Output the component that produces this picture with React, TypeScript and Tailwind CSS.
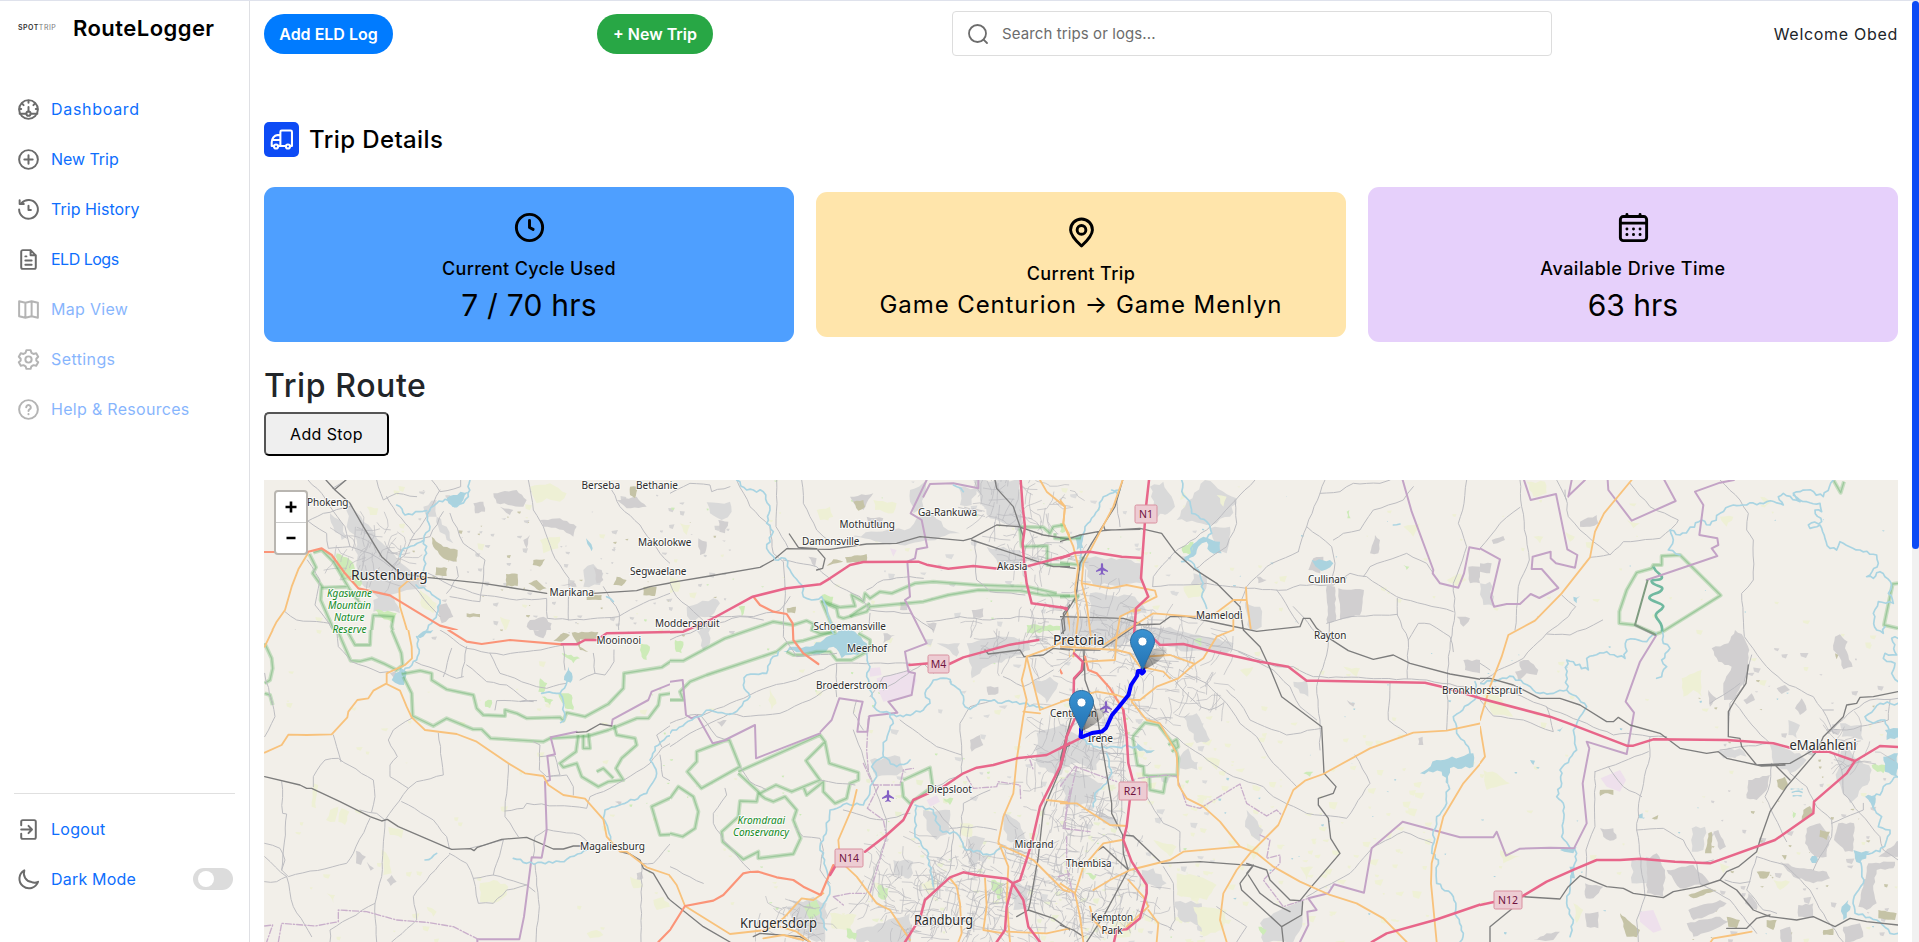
import React from "react";

type Shape = [string, string];

const COLORS: Record<string, { c: string; w: number; dash?: string }> = {
  minor: { c: "#bdbdc1", w: 3 },
  rail: { c: "#7d7d7d", w: 4 },
  motor: { c: "#e8668a", w: 7.5 },
  trunk: { c: "#fb9478", w: 6.5 },
  prim: { c: "#f8c27c", w: 5.5 },
  water: { c: "#a9d4e2", w: 5 },
  admin: { c: "#c3a3c6", w: 6 },
  dash: { c: "#c9afcb", w: 4, dash: "18 6 4 6" },
};
const FILLS: Record<string, string> = {
  urban: "#d9d9d9",
  ind: "#d1cfd0",
  quarry: "#c5c3a6",
  lake: "#aad3df",
  farm: "#eef0d5",
  wood: "#cdebb8",
  mil: "#eee0ec",
};
// Step length and sideways jitter used to roughen natural outlines.
const ROUGH: Record<string, [number, number]> = {
  water: [11, 5],
  minor: [22, 2.2],
  urban: [16, 6],
  ind: [12, 3],
  quarry: [10, 2],
  lake: [12, 5],
  farm: [14, 4],
  wood: [10, 4],
};

const A: Shape[] = [
  ["urban", "M295 480L340 545L430 640L480 690L530 740L470 750L440 760L390 790L370 760L320 720L320 600L290 560Z"],
  ["urban", "M240 520L270 540L290 590L275 600L250 560Z"],
  ["urban", "M560 530L590 560L610 610L590 600L565 560ZM520 500L560 480L560 530L530 530Z"],
  ["urban", "M370 780L430 770L450 820L370 815ZM1000 690L1030 672L1060 700L1050 735L1000 740Z"],
  ["ind", "M670 490L700 485L705 515L675 520ZM730 460L800 450L830 480L820 500L740 490ZM1100 480L1160 470L1190 500L1130 505ZM750 500L790 510L780 525ZM870 540L930 535L980 560L970 590L940 570L880 560ZM820 600L840 585L830 625ZM840 840L880 830L905 850L900 880L850 890L830 860ZM1030 680L1055 690L1060 720L1040 730ZM930 735L970 725L980 740ZM560 800L590 790L610 830L575 850Z"],
  ["quarry", "M545 590L580 620L623 630L620 665L580 655L550 620ZM558 682L592 684L590 708L556 706ZM768 702L803 702L803 738L768 738ZM850 660L885 658L870 680L848 675ZM835 730L860 720L890 745L870 752ZM1100 710L1130 720L1115 738L1090 735ZM1140 440L1162 440L1155 475L1140 465ZM1180 742L1220 740L1215 768L1180 766ZM650 820L690 822L690 832L650 830ZM1010 768L1055 765L1055 780L1010 780ZM995 875L1045 878L1040 895L990 890ZM900 880L955 878L950 898L890 898Z"],
  ["farm", "M840 440L900 430L950 460L930 485L890 475L860 490ZM870 600L930 590L925 625L880 640ZM510 750L560 790L550 820L515 800ZM350 500L385 505L380 525L360 525ZM750 830L780 840L765 875Z"],
  ["wood", "M260 640L300 660L335 720L330 740L290 720L265 690ZM375 810L440 820L430 850L385 825Z"],
  ["lake", "M590 475L610 465L655 455L640 480L615 503L595 490ZM1008 595L1028 625L1025 634L1012 612Z"],
  ["greenband", "M178 642L198 682L188 700L215 738L212 780L248 862L275 915"],
  ["greenband", "M190 638L215 630L250 665L300 750L330 790M215 743L290 740M360 915L370 826L430 830L425 860L438 905"],
  ["minor", "M174 420L215 460L262 530L285 560L300 620L360 640L420 680M248 445L288 420M570 450L530 530L485 595L465 645L425 680M545 420L570 455L632 440L632 420M380 420L400 480L440 460L500 470M600 520L640 610L705 660L690 785L600 770"],
  ["minor", "M835 420L850 510L880 560L915 655L957 715L955 840M1085 450L1110 500L1170 555L1230 640L1260 670M535 700L600 735L690 765L800 780L890 775L892 835L960 840L1105 830L1180 790L1260 760M105 815L140 840L240 850M170 540L230 580L235 625L300 620M172 660L210 720L195 795L245 865M430 680L510 760L570 830M620 680L625 710L590 760M1060 740L1108 820L1105 900M480 600L540 590L580 515M300 500L220 520L170 545M410 470L440 520L490 580M136 870V890"],
  ["rail", "M228 420L255 450L300 490L340 560L395 650L450 700L530 712L700 730L890 760M1030 760L1160 752L1200 740L1260 729M255 448L288 420"],
  ["water", "M660 420L655 470L620 500L585 478L560 490L530 520L540 560L522 600L530 640L518 700M440 495L465 525L530 512M522 600L460 625L450 650M498 735L540 755L570 780L565 810L545 850L515 880L512 900M1070 770L1090 785"],
  ["prim", "M174 640L145 688L125 740L105 810L80 845L52 900M530 712L475 722L448 745L450 800L465 850L480 900"],
  ["trunk", "M42 636L172 636L215 625L245 645L285 700L325 745L420 766L500 815L570 857L620 870L660 900M740 898H830"],
  ["motor", "M980 898H1040L1060 883L1080 877H1262"],
];

const E: Shape[] = [
  ["ind", "M820 0H860L850 25L825 15ZM288 662L318 680L303 705L288 700ZM320 695L342 715L332 722ZM380 750L395 735L410 755L392 768ZM1065 515L1085 515L1080 528ZM1130 730L1145 725L1150 745L1130 750ZM390 130L410 120L405 150Z"],
  ["quarry", "M910 8L930 15L905 35L880 32ZM935 8L1015 6L1010 25L960 28L960 50L985 65L960 60Z"],
  ["farm", "M160 460L175 465L168 535L155 530ZM210 540L235 530L225 575L198 570ZM245 535L268 545L255 585L235 575ZM385 590L430 600L425 625L390 615ZM365 660L385 680L395 730L370 735ZM660 760L700 750L745 770L740 795L700 820L660 815ZM1110 740L1140 750L1150 770L1120 775ZM1180 810L1210 800L1230 830L1190 840ZM200 790L225 795L220 820ZM500 830L530 845L520 860ZM980 910L1010 900L1030 915L990 925Z"],
  ["wood", "M1140 40L1170 50L1160 90L1145 80ZM840 145L862 160L850 190L835 185ZM905 70L960 85L940 100ZM675 215L695 210L690 235L675 230ZM895 190L935 195L940 240L915 235ZM845 200L880 210L870 225Z"],
  ["lake", "M395 150L420 112L440 125L432 165L405 158ZM925 110L938 140L932 158L912 150ZM470 20L500 0H520L480 25Z"],
  ["greenband", "M232 0L272 92L300 94L335 85L370 100L410 120L428 105L424 70L395 0M260 0L285 45H330L332 0"],
  ["greenband", "M14 40L35 85L38 115L30 150L14 160M14 190L30 195L38 225"],
  ["greenband", "M425 132L480 122L515 130L515 150L560 178L640 195L650 235L670 255L735 258L735 240L770 250L800 265L900 262L910 272L920 248L975 260L1045 222L1090 175L1092 130L1205 112L1235 92L1262 90"],
  ["greenband", "M430 140L455 190L458 258L520 288L560 265L640 298L665 298L692 325L850 335L870 325L985 318L1045 300L1130 265L1165 265L1195 225L1200 195L1250 188L1262 200"],
  ["greenband", "M955 315L948 365L900 400L910 412L950 400L965 440L1015 470L1045 455L1090 450L1068 415L1085 385L1130 345L1125 325L1070 315L1062 285M970 315V355H990L985 310M1010 425L1030 415L1060 445M1260 470L1238 500L1175 530L1200 615L1262 612"],
  ["minor", "M230 0L235 50L275 95L360 128L385 125M14 130L45 260L14 320M220 315L230 350L243 395M160 470V440L195 390L235 385L340 450L345 500L335 545M65 455L68 550L80 552L65 720M14 640L60 655L75 690L65 720L85 740L260 700L280 670L330 565M14 755L50 755L80 740L100 830L155 920M14 680L80 740M455 265L400 300L385 330L412 380L390 405V440L445 475L470 455L550 435L545 390L535 310M445 475L375 570L365 740L345 820L350 936M425 515L520 570L560 620L568 655M300 540L350 550L375 570M568 670L620 700L640 745L655 820H700L740 780L800 765M568 675L510 735L460 800L470 870L395 936M345 820L210 900V936M540 0L620 55L730 75L820 62L910 45M690 70L720 130L830 170L860 175L920 160M575 55L550 140M620 50L605 140M465 95L590 145L610 140"],
  ["minor", "M910 48L915 120M1000 70L1005 130L960 150M1005 130L1035 135L1062 95V60M620 105L680 155L740 165L800 210L780 215L830 212M705 240L710 212L820 215M820 335L840 345L838 420L860 440M840 380L885 378L900 435L860 440L920 435L940 470V495M745 400L735 560L775 620M735 543L790 535L800 520L980 535L990 500L1050 475L1170 400L1205 355L1262 320M730 630L710 700L700 735L800 765L825 785M630 655L730 630M820 680L825 620L860 598L960 615L990 645M825 700L838 830L828 936M1200 375L1208 440L1262 465M1145 700L1143 936M1262 610L1210 665L1180 700L1145 700M640 745L700 735M1205 350L1190 315L1262 270"],
  ["rail", "M14 440L120 465L140 475H155L240 515L330 560L365 573L382 568L415 590L560 652L575 658L632 656L642 662L652 652L725 628L800 622L880 657H910L940 648L962 648M1080 665L1110 672L1140 690L1150 715L1180 730L1225 805L1262 840"],
  ["admin", "M652 936V928H778L792 860L815 682L845 683L860 600L855 455L870 450L862 378L885 373L872 322L950 305M1055 285L1058 268L1165 210L1175 185L1262 150"],
  ["dash", "M14 888L38 885L20 936M55 936L65 880L165 888L235 875V840L320 845L410 870L500 877L580 890L655 928"],
  ["rail", "M950 307L980 305L1020 282L1055 288"],
  ["water", "M470 20L478 60L470 90L430 125M900 190L918 165L925 140M845 190L900 190L910 215L915 260L902 278M1262 298L1220 320L1185 350L1170 390L1190 430L1160 490L1095 520L1035 540L1030 565L1045 600L1055 640M760 685L800 700L900 695L985 660M495 690L530 670"],
  ["prim", "M38 0L14 50M445 0L455 50L456 85L435 105L380 130L380 160L340 182L325 205L292 210L265 245L262 262L215 313L140 315L85 314L65 345L14 368M380 162L420 182L440 230L455 262L495 300L590 312L650 335L745 400L795 430L850 438L865 465L910 495L975 506L1030 568L1040 620L1080 665L1100 665L1145 700L1160 712L1228 735L1262 795"],
  ["trunk", "M565 0L620 35L665 42L750 30L905 43M1262 850L1235 895L1195 936"],
  ["motor", "M905 43H950L975 30H1010M1025 20L1040 10L1262 5"],
];

const B: Shape[] = [
  ["urban", "M720 60L770 30L760 110L730 130L720 95ZM740 145L790 130L820 170L870 190L750 215L690 225L540 200L620 185L720 175ZM910 30H1050L1060 160L1020 165L960 145L930 90ZM865 50L920 55L905 105L870 105ZM950 230L1050 240L1060 290L985 285ZM50 410L130 385L150 400L120 440L60 450ZM110 97L180 95L185 125L155 150L120 130ZM75 455H120V520L100 540ZM890 520L1000 500L1080 515L1080 540L950 590L905 625L895 560ZM800 520H870L860 560ZM1085 640L1140 620L1165 640L1130 700ZM600 870L690 860L710 910L620 920ZM1100 790L1180 760L1230 850L1160 920L1100 880ZM760 1020L840 1020L840 1080L800 1110L770 1080ZM350 1310L430 1280L470 1300L465 1416H440L380 1380ZM560 1380L720 1330V1416H560ZM900 1100L945 1105L920 1190L895 1180ZM1020 1230L1075 1260V1320L1030 1320ZM1000 1030L1050 1060L1080 1130L1010 1110ZM670 1170L730 1175L720 1225L675 1215Z"],
  ["ind", "M145 150L175 155L165 190L148 185ZM85 205L110 215L105 250L90 255ZM590 140L640 145L635 170L595 165ZM415 260L440 265L435 290ZM950 650L985 650L985 670L955 675ZM900 810L930 795L940 825L905 845ZM770 460H800L790 490ZM690 395L710 392L712 420L690 420ZM905 420L940 415V440L910 445ZM640 490L675 495L640 520ZM140 755L170 750L155 770ZM540 80L610 70L580 120L555 105Z"],
  ["quarry", "M525 262L590 252V275L530 278ZM550 95L580 90L585 110L565 122ZM350 415L378 410L375 430L352 428ZM490 268L520 275L470 288Z"],
  ["lake", "M460 510L500 490L515 480L555 485L590 520L595 545L540 555L515 565L490 530L455 550L400 555L370 540L340 545L370 530L420 530ZM1215 210L1238 205L1240 240L1218 240Z"],
  ["mil", "M620 625L718 600L740 630L725 675L640 695L625 660ZM597 595L630 592L635 615L600 620ZM770 990L800 975L810 995L780 1010ZM660 235L680 240L670 260Z"],
  ["farm", "M0 320L30 335L25 365L0 370ZM440 120L480 110L490 140L450 150ZM30 160L60 165L50 195ZM300 650L320 700L305 720L295 690ZM870 1060L910 1065L905 1100L875 1095ZM480 1330L560 1335L540 1380L485 1375ZM750 1240L800 1230L790 1280ZM610 90L680 100L670 130L615 120Z"],
  ["wood", "M15 510L40 515L35 550L18 545ZM205 410L225 408L215 440ZM400 1310L440 1290L450 1330L420 1350ZM530 1375L560 1390L555 1410L530 1400ZM965 1230L1000 1240L990 1290L965 1260ZM455 375L490 380L480 410L460 395ZM820 985L850 985L840 1005ZM625 1245L655 1255L645 1290L625 1280ZM1070 465H1180L1175 480L1070 490Z"],
  ["greenband", "M0 572L40 572L165 505L310 455L370 465L410 452L430 462L425 480L450 490L495 488L455 395L500 415L505 440L520 445L590 425L600 410L760 395L835 375L925 360L1050 362L1120 375L1225 378"],
  ["greenband", "M455 392L510 412L555 408L545 375L580 395L585 370L600 385L630 365L665 370L735 340L790 335L920 345L1070 350L1160 370"],
  ["greenband", "M0 690L40 690L30 665L60 635L110 615L320 545L350 520L400 512L490 485M350 545L370 555L400 555L440 545L480 545L500 570L545 570L600 540L600 510L565 490M540 440L560 425L600 400"],
  ["greenband", "M80 845L165 812L178 810L210 890L94 955L52 905L80 875ZM205 905L450 795L465 815L408 872L450 930L365 965L318 945L270 970L205 910M465 815L478 880L565 908L565 930L540 940L530 985L495 1000L460 965V935L410 975L400 950"],
  ["greenband", "M265 970L260 995L210 993L205 1040L155 1085L158 1115L220 1168L265 1145V1165L370 1152L392 1105L370 1050L380 1020L345 980L310 995L285 985ZM0 985L25 950L70 980L85 1025L75 1075L38 1100L0 1090"],
  ["greenband", "M700 930L780 893L788 950L720 1000L700 980L695 935M1050 170L1120 172L1140 190L1150 170L1180 165M1050 175L1055 230L1132 228V285L1200 285M1155 190V205L1230 208L1250 190"],
  ["minor", "M0 70L60 40L120 45L125 65L180 50M200 30L240 110L300 170L310 250L340 275L345 350M395 30L400 100L440 180L480 215M320 30L318 170L335 200L355 235M0 340L20 380L120 470M340 270L440 290L490 340L570 380L600 420L720 430L790 480M600 430L600 480M770 455L870 440L960 450L1060 440L1180 450M915 210L920 330L960 365L1065 375M590 360L640 330L720 320L760 325M0 760L60 735L100 735L180 700L300 650L380 630L500 580L720 580M0 830L60 790L180 730L220 740L330 730L420 690L500 640M500 580V680M120 440L250 440L330 420L360 380M0 510L80 480L140 460L210 440L280 450M345 350L340 500L380 560L500 550M600 680L640 620L720 600"],
  ["minor", "M95 740L140 800L170 810M100 1240L0 1190M210 890L240 935L290 960M165 955L170 975L130 1030V1060L160 1110L240 1200M550 780L620 970L650 1050V1100L590 1270L540 1330M580 780L550 730L560 690M375 1070L400 1100L450 1105L460 1140L450 1200L480 1240M450 930L500 940L555 945M875 850L870 760L900 710L970 690M875 850V910L800 950M875 855L800 830L690 750M520 1020L600 1045L640 1050L720 1030M790 1010L850 1080L840 1200L790 1280L770 1340M910 1190L870 1100L880 1000L960 960M640 660L760 580L790 610M1000 620L1060 650L1150 600M880 1380L940 1330L960 1270M980 1080L920 1070L840 1075M1010 1240L930 1290L890 1400"],
  ["dash", "M580 880L610 945L690 945L700 900L730 895M595 900L590 840L595 740M625 950L592 1015L640 1050L650 1100L600 1270M490 1280L540 1270L590 1270M490 1280L520 1305M890 920L910 955L980 950L985 935L1050 945L1052 985M1080 870L1090 900M1185 1075L1190 1010L1215 890L1260 900M1180 1075L1230 1080L1240 1040M1165 1220L1200 1210L1220 1290L1260 1300"],
  ["admin", "M770 30L722 130L755 150L772 232L740 238L735 265L712 275L720 380L705 390L770 520L705 545L715 605L735 610L725 675L655 695L682 728L598 738L592 785L562 785L568 735L578 695L508 685L485 750L452 785M760 80L780 42L850 40L925 55V30M0 635L38 630L48 735L65 745L82 738L128 820L170 810M165 810L255 765L258 865L450 790"],
  ["rail", "M0 338L120 318L270 292L310 270L350 236L480 238L590 222L680 220L750 200L880 212L905 205L980 165L1045 170L1120 195L1205 208M905 210L1150 290L1210 290L1222 375L1180 430L1185 480L1175 490M358 192L385 232L440 236L465 265L458 295L440 300M1262 210L1220 290M975 30L980 55L1030 110L1060 200M945 540L955 552L1050 540L1062 560L1120 555L1150 535L1240 545L1240 630L1262 640M1262 800L1190 830L1170 900L1120 1020L1105 1160L1080 1300L1075 1320L1150 1345L1200 1380L1262 1395M0 1290L100 1370L180 1416M250 1400L270 1390L390 1400L420 1416M1075 1320L1040 1340"],
  ["water", "M200 30L230 60L280 65L300 120L290 160L310 185L290 235L315 270L345 265L365 310L395 345L400 380L425 390L455 380L470 410L490 490M325 545L300 580L290 610L230 615L220 645L240 680L190 730L120 720L85 740L0 790M590 550L600 590L590 620L600 660L620 720L660 730L670 760L640 830L640 860L605 890L620 920L600 960L580 1005L530 1000L480 1020L470 1080L450 1130L470 1200L480 1260L450 1320L470 1380M660 735L700 740L760 720L780 700L765 670L790 630L830 625L870 660L885 710L900 718L930 690L1060 700L1120 715M640 860L680 890L720 870M735 1005L790 1020L810 1080L860 1090L890 1140L960 1155L1000 1130M740 1010L735 1100L770 1140L790 1250M1262 145L1230 200L1240 240L1225 300M850 45L880 65"],
  ["prim", "M1110 30L1130 65L1185 110L1180 160L1205 210L1215 290L1225 420L1200 560M1190 420L1205 500L1150 530L1070 560L1065 590L1055 630L1070 690L1060 740L1040 870L1030 970L1000 1040L985 1115L1015 1190L1010 1290L1020 1416M560 960L548 1010L505 1110L510 1170M528 1190L560 1220L620 1300L660 1320L720 1410M985 1122L1090 1170L1180 1260L1215 1270L1240 1190M840 1225L860 1250L870 1300L875 1390L865 1416M945 1225L950 1310L940 1380L1000 1390M1130 990L1220 1000L1262 1020M0 1218L20 1245L45 1308L180 1392L290 1380L340 1345L395 1285L430 1290L460 1270M1070 560L1110 720L1190 690L1235 690M1060 725L1110 730M1215 1270L1225 1370L1130 1390L1010 1385M1262 350L1230 340M330 1370L380 1385L420 1416M280 1405L340 1395L400 1410"],
  ["trunk", "M250 380L270 405L310 425L350 432L368 460L370 510L400 550L445 582M0 1380L45 1308L130 1292L160 1275L220 1210L240 1206L265 1205L320 1222L370 1230L400 1250L452 1275L490 1185M1240 545L1262 600"],
  ["motor", "M0 487L40 485L120 450L248 380L350 355L450 343L480 325L540 285L580 276L745 275L770 284L835 296L910 288L985 296M1052 30L1058 110L1065 170L1058 220L1063 285L1070 340L1085 400L1190 415M1075 288L1150 268L1205 255L1262 245M718 585L780 580M838 582L880 562L1020 524L1105 510M1190 415V420M820 950L880 910L920 893L970 885L1040 865L1130 855L1180 830L1235 800M775 970L730 990L700 1050L650 1095L585 1145M498 1185L480 1215M1235 620L1215 640L1210 740L1190 800L1170 890L1110 1010L1085 1120L1050 1230L1028 1240M705 1416L750 1345L765 1290L840 1222L880 1207L920 1215L1010 1226L1028 1240L1060 1290L1075 1370L1110 1416M1028 1240L1010 1310L1005 1380L980 1416M1215 545L1235 570V625"],
];

const C: Shape[] = [
  ["urban", "M435 30L530 85L510 140L440 165L350 150L375 110ZM450 175L510 170L500 250L470 245ZM270 50L310 35L345 110L290 145L280 110ZM60 260L185 265L240 280L245 340L100 345ZM90 370L225 380L260 430L180 440L90 440ZM0 440H230L230 490L180 530L0 530ZM250 470L330 470L430 500L520 520L500 550L380 545L280 520ZM555 395L600 410L605 470L570 480ZM400 310L440 320L430 370L395 355ZM370 740L410 730L450 810L410 820ZM385 835L412 900L360 895V860ZM0 770L60 800L120 850L110 900L0 870ZM700 635L740 630L745 680L720 670ZM120 1030L175 1050L170 1080L130 1060ZM600 1360L640 1330L730 1290L728 1350L700 1416H610ZM345 1295L425 1300L420 1370L360 1350ZM245 1200L280 1195L320 1240L300 1260L250 1240ZM560 1020L610 1080L600 1115L555 1070ZM0 930L50 900L130 940L100 1000L20 1010Z"],
  ["ind", "M945 195L960 210L955 250L930 250ZM1225 290H1260V340H1230ZM760 265L790 260L780 310L745 300ZM590 320L620 330L595 340ZM860 690L885 700L880 710ZM1190 440L1230 445L1210 470ZM1075 805L1088 800L1090 825L1075 825ZM800 348L825 350L828 450L802 460ZM835 355L912 360L900 435L840 450ZM1210 570H1262V610L1215 600Z"],
  ["lake", "M410 215L430 200L480 215L485 250L450 245L440 215L415 230L400 260L370 275L390 240ZM755 270L810 270L820 280L785 303ZM45 200L70 195L70 235L50 240ZM225 810L250 835L285 840L260 850L230 835ZM1080 910L1130 870L1200 862L1240 850L1240 890L1170 895L1165 945L1145 905Z"],
  ["farm", "M365 60L380 80L360 90ZM370 350L420 340L430 375L385 385ZM470 75L500 80L490 110ZM350 1210L400 1215L470 1245L440 1290L350 1275ZM850 590L900 595L890 620ZM1160 330L1200 310L1220 330L1190 350ZM400 1310L500 1320L490 1380L430 1400ZM1030 170L1080 160L1060 200ZM280 1110L350 1130L330 1160ZM540 600L580 590L560 620ZM430 860L480 870L470 900ZM150 1350L220 1340L210 1400H160ZM560 1120L600 1130L580 1170ZM720 1190L760 1190L740 1230Z"],
  ["wood", "M860 125L868 120L872 145L862 145ZM75 1210L110 1215L100 1230ZM400 510L425 505L420 530ZM1030 285L1048 290L1040 300ZM730 910L760 905L750 920ZM595 1370L620 1380L610 1395ZM365 230L400 215L395 250H370ZM0 160L18 165L15 185H0Z"],
  ["greenband", "M0 205L60 205L65 195M0 278L60 285L70 260M0 380L55 378L40 395M218 800L255 758L295 765L330 810L345 830L355 865L352 915L268 918L270 960L310 968L318 920M218 800L232 885L250 890L252 915L268 918M325 825L350 808L355 830L335 845"],
  ["minor", "M780 70L840 65L880 40L960 40L990 30M795 30L740 170L715 245M740 170L815 230L825 280L815 340M820 210L850 190L900 180L940 120L1030 90L1060 50M1220 30L1212 100L1195 160L1220 230L1200 290L1180 340L1185 430L1165 560L1160 780M280 350L440 340L560 355L680 360L720 345L820 345L870 310L920 320L1010 380L1180 425M910 320L930 290L1040 250L1100 280L1120 310M1012 385V435L1045 510L1042 625M650 360L715 460M800 460L870 440L1012 433M808 460L800 555L770 650L780 750V840M585 30L540 75L440 180L340 250L280 320L278 350M525 90L530 160L500 230L400 300M170 90L180 170M250 470L350 490L440 520L540 545L650 590L700 590L760 620L1100 630L1262 660"],
  ["minor", "M330 620L420 710L450 720L490 700M360 600L440 640L500 700L540 760L590 800L640 880L710 950M500 660L540 700L570 750L680 795L785 775M535 545L600 580L640 600L690 650L720 710L770 750M250 720L370 820L520 920L610 950L640 980L740 1030L860 1045L930 940L885 855M260 980L310 1060L360 1085V1145M310 1190L340 1240L345 1350L330 1380M230 1320L340 1380M470 1310L560 1370L530 1416M1045 510L1075 460L1110 462L1170 500L1180 545M990 640L985 750L1040 790M740 1280L870 1210L940 1130L1030 1085L1120 1120M150 720L190 780M120 850L190 850L190 940L180 1080M715 245L620 290L560 350L540 400M770 490L700 410"],
  ["admin", "M1028 30L1055 125L1120 300L1118 310L1140 340L1195 353L1212 310L1228 232L1262 238M720 1416L745 1365L742 1325L770 1320L745 1285L805 1270L822 1243L912 1268L935 1135L1028 1055L1200 1102H1262"],
  ["dash", "M0 950L45 890L170 935M10 1070L50 890M10 1075L90 1085M235 925L320 915L350 920L380 1005L420 1015L540 942L560 1000L620 1038L650 1020L665 1035M600 1095L630 1110L620 1165L660 1155V1180L610 1230L670 1310L745 1285M20 1100V1190L40 1280"],
  ["water", "M365 30L370 75L390 95L395 130L440 155L455 190L430 210L400 225L390 260L365 275M385 270L415 300L430 340L425 380L440 415M180 60L130 80L115 120L75 170L62 240L60 300M155 60L175 75M60 800L100 830L150 830L230 830M140 850L155 910L140 940L105 970L100 1010M1245 635L1250 680L1180 740L1190 790L1225 830L1230 850M1165 945L1160 1000L1130 1040L1115 1150L1135 1170L1130 1240L1180 1280L1190 1340L1210 1390L1200 1416M1000 165L1020 162"],
  ["rail", "M0 215L60 195L130 182L240 175L305 190L345 245L400 295L470 340L540 410L550 480L600 530L630 595L665 680L785 770L792 910L828 950L820 970L775 985L775 1005L805 1045L812 1105L840 1150L750 1255L720 1292L690 1290L630 1230L620 1200L560 1180M188 30L165 110L130 165L135 180L240 178M130 165L95 220L60 280L48 380L5 450L10 490M0 535L50 540L120 540L165 510L230 465L300 462L330 440L380 440L500 465L590 484L720 470L730 445L750 445L770 475L800 500L865 542L940 568L1000 555L1050 580L1170 612L1262 628M0 870L45 700L42 630L70 600L72 540L75 630L110 730L130 850L155 1000V1030L188 1095L190 1150L205 1200L130 1340L80 1416M188 1095L220 1098L305 1180L420 1175L580 1187L540 1240L545 1260L665 1370L725 1335L728 1295M565 1215L600 1270L640 1300L690 1325M115 1140L130 1130L205 1200M665 1370L670 1416M0 1365L40 1380L70 1400M0 290L45 295M560 1210L580 1185M0 440L190 445L240 460"],
  ["trunk", "M75 560L85 600L110 610L150 655L190 720L200 790M0 600L5 610"],
  ["prim", "M70 340L150 355L200 345L285 362L290 380L240 405L220 420L180 440L170 500L165 570L75 575M0 90L15 110L10 160L40 230L55 290L45 360L55 440L40 560M188 30L160 110L70 280L65 340L80 400L95 520M130 525L280 430L400 440L460 435L520 390L560 390L558 352M560 390L572 475M220 425L240 420M0 530L170 540L210 550L240 590L310 605L330 625M520 445V480L470 500L430 565L400 585L355 625L290 650L240 690L215 690M255 560L330 555L400 580M215 695L260 750L300 760L350 850L355 945L380 985L430 1010L480 1055L540 1130L590 1150L640 1190L720 1235L810 1275L890 1300L970 1345L1040 1416M570 1150L530 1200L490 1270L480 1350L500 1416M570 1150L655 1065L700 960L735 932L790 912L930 835L1060 788L1160 782L1262 760M1262 880L1210 940L1150 1040L1115 1180L1113 1240L1130 1416M540 1130L370 1145L330 1170L210 1200L150 1230L100 1260M0 1000L50 1000L150 1065L200 1068M0 1240L45 1270L60 1340L70 1416M45 1270L70 1190L130 1120L185 1110M205 1230L250 1280L265 1310L200 1370M265 1320L295 1360L290 1416M0 695L110 665L170 675L215 690M90 1310L100 1350L140 1390"],
  ["motor", "M0 265L45 248L90 245L185 260L247 264M267 30L258 110L247 264L243 325L265 380L228 415L222 495M280 505L300 525L370 522L440 540L600 575L685 590L740 632L775 632L1095 638L1145 650L1262 685M42 550L68 575L65 600L42 625L40 700M45 745L20 800L10 860L0 895M0 835L60 805M190 720L200 800L205 880L218 930M210 985L200 1070L190 1110L215 1175L260 1245V1270L240 1345L200 1378L170 1380L162 1416M935 1416L980 1390L1125 1350L1262 1303M0 410L20 418"],
];

const D: Shape[] = [
  ["urban", "M0 340L30 335L45 410L10 405ZM715 840L780 835L800 860L730 865ZM870 825L960 850L980 870L930 910L880 880ZM1080 760L1145 765L1150 810L1085 800ZM1080 820L1140 870L1175 900L1170 930L1110 1000L1070 930ZM455 1170L500 1160L545 1180V1250L455 1240ZM925 750L960 765L950 805L925 795ZM635 1075L675 1070L670 1140L635 1145Z"],
  ["ind", "M695 535L745 520L765 480L785 492L808 540L800 620L760 690L732 690L730 640L755 590L715 575ZM1065 500L1080 493L1103 515L1095 535L1118 590L1090 598L1078 560L1060 540ZM890 655L915 645L930 660L905 672ZM790 690L815 670L825 690L800 703ZM0 280L35 280L30 310L0 305ZM118 575L145 570L175 600L170 615L140 610L115 632L105 605L125 600ZM300 155L350 135L355 160L330 170L300 170ZM980 1075L1020 1060L1050 1100L1040 1160L1005 1165L975 1120ZM1075 1060L1122 1060L1118 1145L1095 1145L1062 1110ZM500 1170L530 1150L555 1200L550 1280L500 1270ZM560 1200L640 1185L690 1240L600 1255ZM625 1320L720 1290L740 1300L700 1330L640 1350ZM620 1360L720 1340L745 1355L720 1370L640 1400ZM805 930L870 915L860 960L830 990L800 985ZM1165 1180L1245 1175L1240 1195L1190 1200L1180 1260L1190 1300L1160 1320L1135 1310L1150 1250ZM1090 1370L1140 1360L1150 1400L1110 1416H1095ZM955 1305L1000 1300L1000 1345L955 1340ZM900 1380L930 1370L935 1416H905ZM1195 1160L1260 1110V1160ZM360 1075L400 1075L410 1105L390 1112L370 1100ZM900 1175L960 1195L1040 1205L1050 1225L1000 1240L940 1220ZM965 685L980 720L960 735L945 715ZM700 1085L715 1080L738 1130L720 1140ZM685 660L710 685L690 710ZM315 1330L355 1325L355 1375L320 1370ZM315 1240L370 1250L340 1285H318ZM805 1270L830 1300V1320L795 1300ZM160 1410L200 1390L240 1385L220 1410ZM330 150L345 140L350 165ZM35 210L70 198L75 210L40 222Z"],
  ["quarry", "M420 1330L480 1380L470 1402L440 1400ZM890 930L915 920L925 945L910 962L893 950ZM970 1020L990 1008L1000 1035L965 1050ZM1020 1080L1050 1085L1040 1110L1018 1100ZM360 960L400 960V975L375 970L360 978ZM740 1340L780 1350L770 1375L745 1370ZM685 1090L695 1085L695 1150L675 1150ZM830 1205L870 1205L860 1225L840 1225ZM860 1350L890 1350L880 1380L860 1370ZM1195 1320L1250 1330L1245 1350L1195 1345ZM1065 550L1075 555L1070 568ZM515 1045L535 1035L532 1048ZM625 1275L690 1255L710 1260L640 1285ZM905 1155L920 1155L915 1170ZM1030 1380L1060 1375L1060 1395H1030Z"],
  ["mil", "M362 925L420 900L438 930L420 965L380 950ZM478 1325L520 1320L545 1380L520 1388L480 1355Z"],
  ["farm", "M140 35L195 35L200 70L160 80ZM605 625L665 600L665 680L640 660L610 680ZM255 185L285 200L270 215ZM0 660L60 680L100 740L40 735ZM10 900L50 910L90 940L20 960ZM720 140L760 140L740 170ZM840 80L880 90L860 105ZM440 150L480 160L460 175ZM160 200L190 200L180 220ZM60 1140L120 1160L70 1180ZM280 1300L310 1320L290 1360ZM880 1230L930 1235L900 1260ZM720 1180L750 1190L730 1210Z"],
  ["wood", "M1175 885L1225 885L1210 910L1185 900ZM935 1020L948 1030L940 1045Z"],
  ["lake", "M1210 860L1254 850V925L1215 905ZM1155 980L1185 975L1185 1020ZM280 380L300 378L290 400ZM990 1168L996 1158L1008 1158L1014 1168L1008 1179L996 1179ZM150 870L165 872L160 885ZM240 1140L290 1130L280 1150ZM1120 1140L1170 1145L1140 1180L1125 1165ZM1085 1310L1105 1290L1110 1320L1090 1350ZM475 1035L488 1030L488 1045H478ZM230 780L250 770L240 785ZM1215 780L1254 775V800L1220 810ZM268 1190H285V1225H270ZM932 955H968V960H932ZM935 965H968V970H935ZM938 975H965V980H938Z"],
  ["greenband", "M600 255L722 376L548 485L528 492L465 465L418 460V425L440 360L470 308L515 295L520 285H545V258Z"],
  ["greenband", "M1060 30L1082 68L1092 35M1254 340L1238 342L1212 465L1254 475"],
  ["minor", "M120 30L125 110L148 270L115 350L105 480M0 235L60 160L120 112M255 60L265 140L300 180L340 215L390 255L430 215L540 205L590 160L595 150L510 110L450 40M230 30L260 90M330 262L390 253M245 375L287 410L265 440L200 490L160 530L130 565L55 600L0 640M200 492L270 495L340 465L368 450M720 30L780 90L805 130L800 180L820 210V330L785 370L793 500L860 590L910 635L1000 680L1040 740L1060 790M815 555L790 650L750 700L745 800M0 580L30 600M45 650L200 710L220 785L130 750L40 738L0 690M200 712L400 795L440 790L510 800L560 800M510 800V860L480 980L470 1080L495 1280L470 1350L475 1416M345 905L505 845M345 905L345 1070L318 1140V1220M470 1080L550 1075L610 1110L650 1180L660 1240L750 1290L830 1390"],
  ["minor", "M765 700L830 780L870 820M385 890L430 950L485 980M875 880L870 940L855 980L920 1115M930 910L980 950L1010 1010L1055 1050V1100L1000 1200M1055 1060L1150 1020V1000M1060 850L1085 900L1090 970L1140 1030L1200 1100L1210 1140L1254 1170M830 1160L915 1185L990 1260L1040 1350L1090 1416M830 1160L800 1260L850 1320L890 1330M1045 790L1120 720L1170 690L1254 685M720 840L870 820M780 640L690 700M735 1230L780 1240L810 1235M1040 780L1100 780L1225 750L1230 690M650 1180L700 1170M1085 900L1120 880L1125 870M1030 720L1060 720"],
  ["water", "M1060 30L1030 80L980 60L940 70L960 95L910 70L895 80L910 105L860 95L800 105L760 105L720 130L690 165L665 150L625 180L600 195L570 180L580 210L565 240L600 255M940 75L980 95L1020 100L1025 125L1005 120L1025 155L985 165L990 175L1020 165L1050 235L1070 240L1080 215L1140 240L1190 255L1195 280L1160 320L1180 325L1200 305L1235 345L1225 370L1240 400L1195 395L1180 430L1190 480L1210 490L1215 470M1254 505L1235 505L1250 555L1215 550L1210 565L1245 580L1235 610L1254 635"],
  ["waterdark", "M520 290C528 312 552 315 545 325C538 335 512 325 515 335C520 350 555 345 545 360C538 372 508 370 508 384C512 396 552 398 550 410C545 425 522 425 528 440C535 455 550 460 546 485"],
  ["water", "M528 490L500 515L440 510L435 565L380 545L320 565L325 600L260 570L260 660L230 665L180 670L130 640L100 620L80 625L0 640M548 487L550 520L570 535L545 570L560 590L545 620L530 625M260 660L320 710L300 740L280 780L290 840L240 900L245 940L230 980L250 1000L245 1100L290 1150L280 1200L270 1260L260 1300L280 1350L270 1400M1254 700L1200 700L1155 740L1180 760L1215 750L1225 790L1254 800M1254 920L1210 950L1200 975L1170 980L1185 1020L1205 1040L1195 1070L1230 1080L1220 1110L1200 1145L1130 1150L1145 1190L1150 1240L1120 1290L1125 1330L1190 1350L1230 1390L1254 1390"],
  ["admin", "M132 30L152 90L228 72L262 238L292 255L285 293L228 280L212 265V245L158 260L155 297H185L235 354L178 384L152 372L120 402H80L42 410L33 382L60 268L0 235M265 80L275 30M265 78L315 30M383 30L385 60L455 152L587 93L553 30M762 30L720 38L645 65L670 105L658 195L712 205L715 225L695 235L712 258L500 330M465 465L528 497L480 575L437 695L462 728L440 852L320 815L328 835L308 940L320 1060L282 1135L210 1133L120 1136L78 1157L50 1085L40 1102H0"],
  ["rail", "M0 625H30L100 645L180 685L240 685L300 705L380 755L400 755L415 742L450 765L540 790L600 835L680 850L715 845L740 865L845 888L915 885M805 585L798 640L765 690L745 725L745 800L780 805L785 830L830 885L930 880L1000 840M1254 665L1180 680L1140 682L1130 700L1100 705L1090 740L1030 800L1010 845L920 950L870 1025L840 1110L830 1145L775 1190L740 1205L720 1230L660 1250L580 1265L550 1283L460 1270L430 1255L380 1250L300 1217L265 1250L240 1287L130 1280M720 1230L770 1260L820 1320L870 1340L950 1350L1000 1340L1065 1370L1110 1345L1160 1355L1254 1365M740 1375L800 1375L830 1345L870 1335M885 885L930 930M95 1317L30 1370V1416M300 1217L320 1225"],
  ["raillight", "M503 330L465 465L528 495"],
  ["prim", "M455 30L372 130L345 185L330 262L245 370L165 452L85 495L65 560L30 650L0 750M0 770L15 860L0 880M692 1416L700 1405L760 1395L815 1385"],
  ["motor", "M0 685L210 740L260 758L440 827H460L520 808L740 810L880 820L930 833M1000 845H1045L1125 873L1200 828L1254 831M1125 873L1100 910L1002 995L1000 1030L885 1110L690 1180L585 1175L480 1166L420 1170H350L290 1195L200 1235L125 1280M45 1295L0 1305"],
];

function rng(seed: number) {
  let s = seed;
  return () => {
    s = (s * 1664525 + 1013904223) % 4294967296;
    return s / 4294967296;
  };
}

// Subdivides a straight-line path and shifts the new points sideways.
function roughen(d: string, step: number, amp: number): string {
  const r = rng(d.length * 31 + 7);
  const tokens = d.match(/[MLHVZ]|-?\d+(?:\.\d+)?/g) ?? [];
  let out = "";
  let cmd = "M";
  let x = 0;
  let y = 0;
  let sx = 0;
  let sy = 0;
  let i = 0;
  const to = (nx: number, ny: number) => {
    const dx = nx - x;
    const dy = ny - y;
    const len = Math.hypot(dx, dy);
    const n = Math.max(1, Math.round(len / step));
    for (let k = 1; k < n; k++) {
      const j = (r() - 0.5) * 2 * amp;
      out += `L${(x + (dx * k) / n - (dy / len) * j).toFixed(1)} ${(y + (dy * k) / n + (dx / len) * j).toFixed(1)}`;
    }
    out += `L${nx} ${ny}`;
    x = nx;
    y = ny;
  };
  while (i < tokens.length) {
    if (/[MLHVZ]/.test(tokens[i])) {
      cmd = tokens[i++];
      if (cmd === "Z") {
        to(sx, sy);
        out += "Z";
        continue;
      }
    }
    if (cmd === "M") {
      x = sx = Number(tokens[i++]);
      y = sy = Number(tokens[i++]);
      out += `M${x} ${y}`;
      cmd = "L";
    } else if (cmd === "H") to(Number(tokens[i++]), y);
    else if (cmd === "V") to(x, Number(tokens[i++]));
    else {
      const nx = Number(tokens[i++]);
      to(nx, Number(tokens[i++]));
    }
  }
  return out;
}

const prepare = (shapes: Shape[]): Shape[] =>
  shapes.map(([k, d]) => (ROUGH[k] ? [k, roughen(d, ROUGH[k][0], ROUGH[k][1])] : [k, d]));

const LAYERS: { x: number; y: number; w: number; h: number; shapes: Shape[] }[] = [
  { x: 250, y: 340, w: 420, h: 290, shapes: prepare(A) },
  { x: 260, y: 630, w: 410, h: 312, shapes: prepare(E) },
  { x: 670, y: 470, w: 400, h: 472, shapes: prepare(B) },
  { x: 1060, y: 470, w: 420, h: 472, shapes: prepare(C) },
  { x: 1480, y: 470, w: 418, h: 472, shapes: prepare(D) },
];

function Feature({ kind, d }: { kind: string; d: string }) {
  if (FILLS[kind]) return <path d={d} fill={FILLS[kind]} />;
  if (kind === "greenband")
    return (
      <g fill="none" strokeLinejoin="round">
        <path d={d} stroke="#7fbf7f" strokeOpacity="0.38" strokeWidth="12" />
        <path d={d} stroke="#5da864" strokeOpacity="0.38" strokeWidth="4" />
      </g>
    );
  if (kind === "waterdark") return <path d={d} fill="none" stroke="#70b9a0" strokeWidth="8" />;
  if (kind === "raillight") return <path d={d} fill="none" stroke="#7f9c80" strokeWidth="6" />;
  const s = COLORS[kind];
  return (
    <path d={d} fill="none" stroke={s.c} strokeWidth={s.w} strokeDasharray={s.dash} strokeLinejoin="round" strokeLinecap="round" />
  );
}

// [cx, cy, rx, ry, number of streets]
const TOWNS: number[][] = [
  [370, 555, 36, 32, 45], [1020, 500, 55, 25, 40], [1050, 560, 45, 20, 30],
  [1100, 625, 70, 40, 90], [1090, 720, 50, 40, 65], [1170, 690, 60, 35, 55],
  [1080, 780, 60, 50, 65], [1070, 860, 70, 60, 80], [1000, 890, 80, 50, 100],
  [950, 900, 70, 40, 80], [1110, 900, 50, 40, 60], [900, 880, 40, 50, 40],
  [1010, 640, 60, 22, 30], [790, 920, 40, 20, 30], [1850, 750, 25, 24, 18], [1020, 530, 40, 40, 20], [1165, 640, 70, 20, 40],
];

function streets(): string {
  const r = rng(71);
  let d = "";
  for (const [cx, cy, rx, ry, n] of TOWNS) {
    for (let i = 0; i < n; i++) {
      const t = r() * 6.283;
      const q = Math.sqrt(r());
      let x = cx + Math.cos(t) * rx * q;
      let y = cy + Math.sin(t) * ry * q;
      d += `M${x.toFixed(1)} ${y.toFixed(1)}`;
      let a = Math.floor(r() * 4) * 1.571 + r() * 0.5;
      for (let k = 0; k < 3; k++) {
        x += Math.cos(a) * (3 + r() * 8);
        y += Math.sin(a) * (3 + r() * 8);
        a += (r() - 0.5) * 1.3;
        d += `L${x.toFixed(1)} ${y.toFixed(1)}`;
      }
    }
  }
  return d;
}

function patches(seed: number, n: number, x0: number, y0: number, w: number, h: number, size: number): string {
  const r = rng(seed);
  let d = "";
  for (let i = 0; i < n; i++) {
    const x = x0 + r() * w;
    const y = y0 + r() * h;
    const s = size * (0.3 + r());
    d += `M${x.toFixed(1)} ${y.toFixed(1)}l${s.toFixed(1)} ${(s * 0.3 * (r() - 0.5)).toFixed(1)}l${(-s * 0.3).toFixed(1)} ${(s * (0.4 + r() * 0.5)).toFixed(1)}l${(-s * 0.6).toFixed(1)} ${(-s * 0.2).toFixed(1)}z`;
  }
  return d;
}

// [text, left, right, baseline, font size, kind]
type Label = [string, number, number, number, number, string?];
const LABELS: Label[] = [
  ["Phokeng", 307, 348.5, 505.7, 10.5],
  ["Berseba", 581.5, 620, 488.7, 10.5],
  ["Bethanie", 636, 678, 489, 10.5],
  ["Makolokwe", 638, 691.5, 545.5, 10.5],
  ["Segwaelane", 630, 686.5, 575, 10.5],
  ["Rustenburg", 351, 427.5, 580, 14],
  ["Marikana", 549.5, 594, 596, 10.5],
  ["Modderspruit", 655, 719.5, 626.5, 10.5],
  ["Mooinooi", 596.5, 641, 644, 10.5],
  ["Kgaswane", 327, 372, 597, 10, "park"],
  ["Mountain", 328, 371, 609, 10, "park"],
  ["Nature", 334, 364.5, 621, 10, "park"],
  ["Reserve", 332.5, 366.5, 633, 10, "park"],
  ["Ga-Rankuwa", 918, 977, 516, 10.5],
  ["Mothutlung", 839.5, 895, 528, 10.5],
  ["Damonsville", 802, 859.5, 544.5, 10.5],
  ["Akasia", 997, 1027.5, 570, 10.5],
  ["Schoemansville", 813.5, 886, 630, 10.5],
  ["Meerhof", 847, 887, 651.5, 10.5],
  ["Broederstroom", 816, 887.5, 689, 10.5],
  ["Pretoria", 1053, 1104.5, 644.5, 14],
  ["Centurion", 1050, 1097, 716.5, 10.5],
  ["Irene", 1088, 1113, 742, 10.5],
  ["Diepsloot", 927, 972, 793, 10.5],
  ["Midrand", 1014.5, 1053.5, 848, 10.5],
  ["Thembisa", 1066, 1111.5, 867, 10.5],
  ["Randburg", 914, 973, 925, 14],
  ["Krugersdorp", 740, 817, 928, 14],
  ["Kempton", 1091, 1133, 921, 10.5],
  ["Park", 1101.5, 1122.5, 933.5, 10.5],
  ["Kromdraai", 737.5, 785, 824, 10.5, "park"],
  ["Conservancy", 733, 789, 836, 10.5, "park"],
  ["Magaliesburg", 580, 645, 849.5, 10.5],
  ["Mamelodi", 1196, 1242.5, 619, 10.5],
  ["Cullinan", 1308, 1346, 582.5, 10.5],
  ["Rayton", 1314, 1346.5, 638.5, 10.5],
  ["Bronkhorstspruit", 1442, 1522, 693.5, 10.5],
  ["eMalahleni", 1789.5, 1856.5, 749.5, 14],
];

const SHIELDS: [string, number, number, number, number][] = [
  ["N1", 1135, 505, 22, 18],
  ["M4", 928, 655, 21, 18],
  ["N14", 835, 849, 28, 18],
  ["R21", 1119, 782, 28, 18],
  ["N12", 1494, 891, 28, 18],
];

function Pin({ x, y }: { x: number; y: number }) {
  return (
    <g transform={`translate(${x} ${y})`}>
      <path d="M12.5 41L20 22C29 17 37 17 37 21C36 27 24 37 12.5 41Z" fill="url(#shadow)" />
      <path
        d="M12.5.5C5.9.5.5 5.9.5 12.4c0 2.7 1 5 2.2 7.3L12.5 40.5 22.3 19.7c1.2-2.3 2.2-4.600 2.2-7.300C24.5 5.900 19.100.5 12.5.5Z"
        fill="url(#pin)"
        stroke="#2e6d9f"
      />
      <circle cx="12.500" cy="12.500" r="4.500" fill="#fff" stroke="#2b75b0" strokeWidth="0.800" />
    </g>
  );
}

function Plane({ x, y }: { x: number; y: number }) {
  return (
    <path
      transform={`translate(${x} ${y})`}
      d="M0-6C.9-6 1.100-5 1.100-4V-1.500L6 1.700V3L1.100 1.600V4L2.800 5.200V6L0 5.300-2.800 6V5.200L-1.100 4V1.600L-6 3V1.700L-1.100-1.500V-4C-1.100-5-.9-6 0-6Z"
      fill="#8461c4"
    />
  );
}

function RouteMap() {
  return (
    <svg viewBox="264 480 1634 462" width="1634" height="462" className="block">
      <defs>
        <linearGradient id="pin" x1="0" y1="0" x2="0" y2="1">
          <stop offset="0" stopColor="#3a93d2" />
          <stop offset="1" stopColor="#2473b4" />
        </linearGradient>
        <linearGradient id="shadow" x1="0" y1="1" x2="1" y2="0">
          <stop offset="0" stopColor="#000" stopOpacity="0.500" />
          <stop offset="1" stopColor="#000" stopOpacity="0.050" />
        </linearGradient>
        {LAYERS.map((l, i) => (
          <clipPath key={i} id={`sheet${i}`}>
            <rect x="0" y="0" width={l.w * 3} height={l.h * 3} />
          </clipPath>
        ))}
      </defs>
      <rect x="264" y="480" width="1634" height="462" fill="#f2efe9" />
      <path d={patches(5, 260, 264, 480, 1634, 462, 6)} fill="#eef0d5" />
      <path d={patches(9, 130, 1130, 720, 300, 222, 8)} fill="#eff1d6" />
      <path d={patches(33, 100, 860, 760, 260, 182, 6)} fill="#e9efd2" />
      <path d={patches(11, 90, 400, 490, 330, 150, 5)} fill="#d5d4d4" />
      <path d={patches(13, 130, 880, 480, 330, 462, 7)} fill="#dbdbdb" />
      <path d={patches(17, 60, 1690, 640, 208, 300, 7)} fill="#d4d2d3" />
      <path d={patches(19, 36, 1680, 680, 215, 260, 3.5)} fill="#c8c6aa" />
      <path d={patches(21, 30, 400, 500, 330, 140, 3.5)} fill="#c8c6aa" />
      <path d={patches(23, 80, 620, 480, 600, 462, 3)} fill="#cdebb8" />
      <path d={patches(27, 70, 1200, 480, 698, 462, 2.5)} fill="#aad3df" />
      {LAYERS.map((l, i) => (
        <g key={i} transform={`translate(${l.x} ${l.y}) scale(0.333333)`} clipPath={`url(#sheet${i})`}>
          {l.shapes.filter(([k]) => FILLS[k]).map(([k, d], j) => (
            <Feature key={j} kind={k} d={d} />
          ))}
        </g>
      ))}
      <path d={streets()} fill="none" stroke="#bcbcc0" strokeWidth="0.700" />
      {LAYERS.map((l, i) => (
        <g key={i} transform={`translate(${l.x} ${l.y}) scale(0.333333)`} clipPath={`url(#sheet${i})`}>
          {l.shapes.filter(([k]) => !FILLS[k]).map(([k, d], j) => (
            <Feature key={j} kind={k} d={d} />
          ))}
        </g>
      ))}
      <Plane x={1102} y={569} />
      <Plane x={1106} y={707} />
      <Plane x={888} y={796} />
      <g fontFamily="'Noto Sans', sans-serif">
        {SHIELDS.map(([t, x, y, w, h]) => (
          <g key={t}>
            <rect x={x} y={y} width={w} height={h} rx="1.500" fill="#edccd3" stroke="#d9909f" />
            <text x={x + w / 2} y={y + 12.6} textAnchor="middle" fontSize="10.500" fill="#70133f">{t}</text>
          </g>
        ))}
        {LABELS.map(([t, x1, x2, y, size, kind]) => (
          <text
            key={t}
            x={x1}
            y={y}
            textLength={x2 - x1}
            lengthAdjust="spacingAndGlyphs"
            fontSize={size}
            fontStyle={kind ? "italic" : "normal"}
            fill={kind ? "#128a1e" : "#2c2c2c"}
            stroke="#ffffff"
            strokeOpacity="0.750"
            strokeWidth="2"
            strokeLinejoin="round"
            paintOrder="stroke"
          >
            {t}
          </text>
        ))}
      </g>
      <path
        d="M1081 729V733L1080.500 736.500L1082 737L1092 733L1102 731.500L1106 728L1112 715L1118 708L1128.500 695L1131 685L1137 676L1138 671H1140L1142 673.500L1144 671.500L1142.500 668.500"
        fill="none"
        stroke="#0000ff"
        strokeWidth="4"
        strokeLinejoin="round"
        strokeLinecap="round"
      />
      <Pin x={1130} y={629} />
      <Pin x={1069} y={690} />
    </svg>
  );
}

function Glyph({ children, size = 25, width = 1.9 }: { children: React.ReactNode; size?: number; width?: number }) {
  return (
    <svg width={size} height={size} viewBox="0 0 24 24" fill="none" stroke="currentColor" strokeWidth={width} strokeLinecap="round" strokeLinejoin="round" className="shrink-0">
      {children}
    </svg>
  );
}

const NAV: { label: string; track: string; off?: boolean; icon: React.ReactNode }[] = [
  {
    label: "Dashboard",
    track: "tracking-[0.7px]",
    icon: (
      <>
        <circle cx="12" cy="12" r="9" />
        <path d="M3.500 16H9.500M14.500 16H20.500M12 3.500V5.500M6 6.500L7.300 7.800M18 6.500L16.700 7.800M3.500 11.500H5M19 11.500H20.500M12 9.500V14" />
        <circle cx="12" cy="16" r="2" />
      </>
    ),
  },
  { label: "New Trip", track: "tracking-[-0.05px]", icon: (<><circle cx="12" cy="12" r="9" /><path d="M12 8V16M8 12H16" /></>) },
  { label: "Trip History", track: "tracking-[0.05px]", icon: (<><path d="M5.200 6A9 9 0 1 1 3 12" /><path d="M3.500 3.200V6.800H7.500M12 8.500V12.500H14.300" /></>) },
  {
    label: "ELD Logs",
    track: "tracking-[-0.5px]",
    icon: (
      <>
        <path d="M14 3H6.500A1.500 1.500 0 0 0 5 4.500V19.500A1.500 1.500 0 0 0 6.500 21H17.500A1.500 1.500 0 0 0 19 19.500V8L14 3V8H19" />
        <path d="M9 9H10M9 13H15M9 17H15" />
      </>
    ),
  },
  { label: "Map View", track: "tracking-[0.3px]", off: true, icon: <path d="M3 4L9 5.500L15 4L21 5.500V20L15 18.500L9 20L3 18.500ZM9 5.500V20M15 4V18.500" /> },
  {
    label: "Settings",
    track: "tracking-[0.4px]",
    off: true,
    icon: (
      <>
        <path d="M10 3H14L14.800 5.600L16.800 6.700L19.400 6L21.300 9.400L19.500 11.300V13L21.300 14.700L19.400 18L16.800 17.400L14.800 18.500L14 21H10L9.200 18.500L7.200 17.400L4.600 18L2.700 14.700L4.500 13V11.300L2.700 9.400L4.600 6L7.200 6.700L9.200 5.600Z" />
        <circle cx="12" cy="12" r="3" />
      </>
    ),
  },
  {
    label: "Help & Resources",
    track: "tracking-[0.3px]",
    off: true,
    icon: (
      <>
        <circle cx="12" cy="12" r="9" />
        <path d="M9.800 9.800A2.200 2.200 0 1 1 13.200 11.700C12.300 12.200 12 12.600 12 13.500M12 16.400V16.500" />
      </>
    ),
  },
];

function Sidebar() {
  return (
    <aside className="flex w-[250px] shrink-0 flex-col border-r border-[#dfe0e4] text-[#6b6b6b]">
      <div className="flex h-[53px] items-center pl-[18px]">
        <div className="w-[38px] whitespace-nowrap text-[7px] leading-none tracking-[0.5px] text-[#777]">
          <span className="font-semibold text-[#333]">SPOT</span>TRIP
        </div>
        <div className="pl-[17px] text-[22px] font-semibold leading-none tracking-[0.45px] text-black">RouteLogger</div>
      </div>
      <nav className="mt-[30px] flex flex-col">
        {NAV.map((n) => (
          <a key={n.label} className={n.off ? "flex h-[50px] items-center gap-[10px] pl-4 opacity-50" : "flex h-[50px] items-center gap-[10px] pl-4"}>
            <Glyph>{n.icon}</Glyph>
            <span className={`text-[16px] text-[#0d6efd] ${n.track}`}>{n.label}</span>
          </a>
        ))}
      </nav>
      <div className="mx-[14px] mt-auto border-t border-[#e0e0e0]" />
      <div className="mt-[10px] flex h-[50px] items-center gap-[10px] pl-4">
        <Glyph><path d="M5 8V4.500A1.500 1.500 0 0 1 6.500 3H17.500A1.500 1.500 0 0 1 19 4.500V19.500A1.500 1.500 0 0 1 17.500 21H6.500A1.500 1.500 0 0 1 5 19.500V16M5 12H15M12 8.500L15.300 12L12 15.500" /></Glyph>
        <span className="text-[16px] tracking-[0.3px] text-[#0d6efd]">Logout</span>
      </div>
      <div className="mb-[38px] flex h-[50px] items-center gap-[10px] pl-4">
        <Glyph><path d="M8 3.200A9.200 9.200 0 1 0 21.200 14.200A8 8 0 0 1 15 14.500A8.500 8.500 0 0 1 8 3.200Z" /></Glyph>
        <span className="text-[16px] tracking-[0.2px] text-[#0d6efd]">Dark Mode</span>
        <span className="ml-auto mr-4 flex h-[22px] w-10 items-center rounded-full bg-[#dcdcdc] pl-[4.500px]">
          <span className="h-4 w-4 rounded-full bg-white" />
        </span>
      </div>
    </aside>
  );
}

export default function App() {
  return (
    <div className="flex h-[942px] w-[1919px] overflow-hidden border-t border-[#dfe2ec] bg-white font-['Inter',sans-serif] text-[#212529]">
      <Sidebar />
      <main className="flex min-w-0 flex-1 flex-col pl-[14px]">
        <header className="mt-[10px] flex h-[45px] w-[1634px] shrink-0 items-center">
          <button className="h-10 w-[129px] rounded-[20px] bg-[#007bff] text-[16px] font-semibold text-white">Add ELD Log</button>
          <button className="ml-[204px] h-10 w-[116px] rounded-[20px] bg-[#28a745] text-[16px] font-semibold text-white">+ New Trip</button>
          <div className="ml-[239px] flex h-[45px] w-[600px] items-center rounded-[4px] border border-[#dddddd] pl-[13px] text-[#6c6c6c]">
            <Glyph size={24} width={1.8}><circle cx="11.500" cy="11.500" r="8.500" /><path d="M17.800 17.800L21 21" /></Glyph>
            <span className="pl-3 pt-px text-[15px] tracking-[0.1px]">Search trips or logs...</span>
          </div>
          <div className="ml-auto whitespace-nowrap text-[16px] tracking-[0.7px]">Welcome Obed</div>
        </header>
        <div className="mt-[66px] flex h-[35px] shrink-0 items-center gap-[10px]">
          <div className="flex h-[35px] w-[35px] items-center justify-center rounded-[5px] bg-[#0d4bf5] text-white">
            <Glyph size={26} width={1.9}>
              <path d="M10.500 17.500V4.500A1.200 1.200 0 0 1 11.700 3.300H20A1.200 1.200 0 0 1 21.200 4.500V17.500H19.500M10.500 7.500H7.500C5 7.500 2.500 11 2.500 14V17.500H4.500M8.500 17.500H15.500M3 12H10.500" />
              <circle cx="6.500" cy="18" r="1.900" />
              <circle cx="17.500" cy="18" r="1.900" />
            </Glyph>
          </div>
          <h1 className="text-[24px] font-medium leading-none tracking-[0.4px] text-black">Trip Details</h1>
        </div>
        <section className="mt-[30px] flex h-[155px] w-[1634px] shrink-0 items-center justify-between text-black">
          <div className="flex h-[155px] w-[530px] flex-col items-center rounded-[11px] bg-[#4e9fff] pt-[23px]">
            <Glyph size={35} width={2}><circle cx="12" cy="12" r="9" /><path d="M12 7.200V12L14.500 13.300" /></Glyph>
            <div className="mt-[10px] h-[27px] text-[18px] font-medium leading-[27px] tracking-[0.3px]">Current Cycle Used</div>
            <div className="pt-px text-[30px] leading-[45px] tracking-[0.2px]">7 / 70 hrs</div>
          </div>
          <div className="flex h-[145px] w-[530px] flex-col items-center rounded-[11px] bg-[#ffe5ab] pt-[23px]">
            <Glyph size={35} width={2}><path d="M12 21.300C8 17.500 4.500 13.800 4.500 10.200A7.500 7.500 0 0 1 19.500 10.200C19.500 13.800 16 17.500 12 21.300Z" /><circle cx="12" cy="10.200" r="3" /></Glyph>
            <div className="mt-[10px] h-[27px] text-[18px] font-medium leading-[27px] tracking-[0.4px]">Current Trip</div>
            <div className="text-[24px] leading-[36px] tracking-[0.9px]">Game Centurion → Game Menlyn</div>
          </div>
          <div className="flex h-[155px] w-[530px] flex-col items-center rounded-[11px] bg-[#e6d0fb] pt-[23px]">
            <Glyph size={35} width={2}>
              <rect x="3" y="4.500" width="18" height="16.500" rx="2" />
              <path d="M7.500 3V4.500M16.500 3V4.500M3 9H21" />
              <path d="M7.500 13V13.100M12 13V13.100M16.500 13V13.100M7.500 16.800V16.900M12 16.800V16.900M16.500 16.800V16.900" />
            </Glyph>
            <div className="mt-[10px] h-[27px] text-[18px] font-medium leading-[27px] tracking-[0.5px]">Available Drive Time</div>
            <div className="pt-px text-[30px] leading-[45px]">63 hrs</div>
          </div>
        </section>
        <h2 className="mt-[25px] h-[38px] shrink-0 text-[32px] font-medium leading-[38px] tracking-[0.6px]">Trip Route</h2>
        <button className="mt-[7px] h-11 w-[125px] shrink-0 rounded-[5px] border-2 border-b-black border-l-[#555] border-r-black border-t-[#555] bg-[#efefef] text-[16px] tracking-[0.4px] text-black">Add Stop</button>
        <div className="relative mt-[24px] h-[462px] w-[1634px] shrink-0 overflow-hidden">
          <RouteMap />
          <div className="absolute left-[10px] top-[10px] flex w-[34px] flex-col overflow-hidden rounded-[4px] border-2 border-[#b9b6b1] bg-white">
            <button className="flex h-[31px] items-center justify-center border-b border-[#ccc]">
              <svg width="12" height="12" viewBox="0 0 12 12" stroke="#000" strokeWidth="2.600"><path d="M.5 6H11.500M6 .5V11.500" /></svg>
            </button>
            <button className="flex h-[30px] items-center justify-center">
              <svg width="12" height="12" viewBox="0 0 12 12" stroke="#000" strokeWidth="2.600"><path d="M1.500 6H10.500" /></svg>
            </button>
          </div>
        </div>
      </main>
      <div className="w-[7px] shrink-0 bg-[#f1f1f1]">
        <div className="h-[548px] rounded-[4px] bg-[#0d4bf5]" />
      </div>
    </div>
  );
}
